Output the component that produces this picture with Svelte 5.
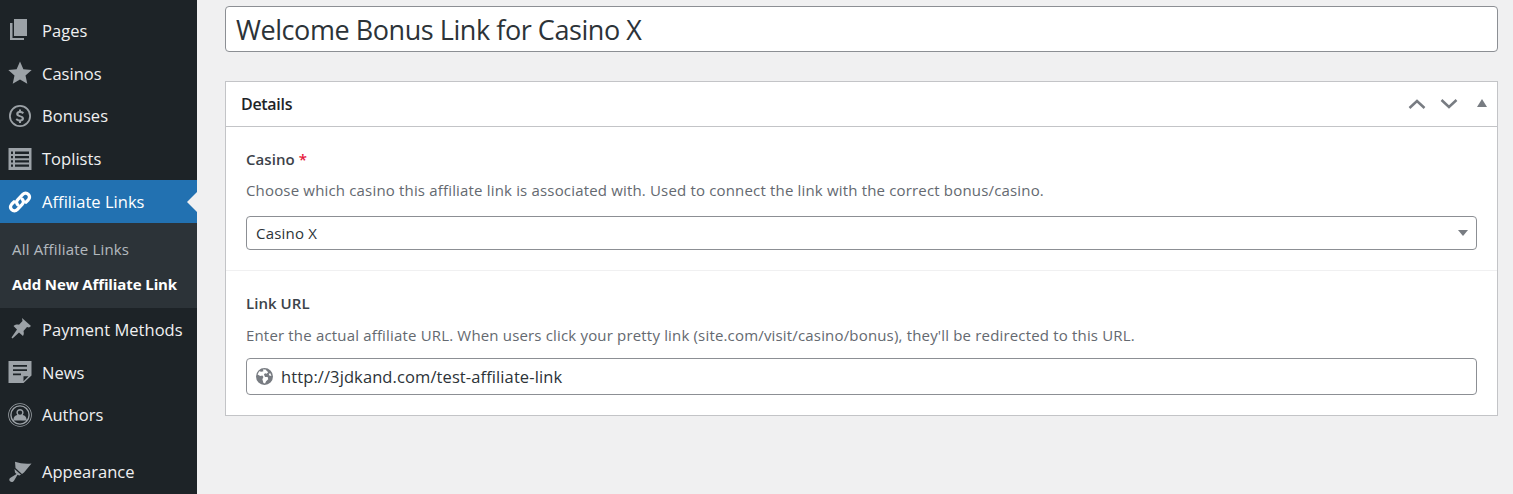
<script>
	const topItems = [
		{ label: 'Pages', icon: 'pages' },
		{ label: 'Casinos', icon: 'star' },
		{ label: 'Bonuses', icon: 'dollar' },
		{ label: 'Toplists', icon: 'list' }
	];
	const bottomItems = [
		{ label: 'Payment Methods', icon: 'pin' },
		{ label: 'News', icon: 'news' },
		{ label: 'Authors', icon: 'author' }
	];
</script>

{#snippet icon(name)}
	<svg class="icon" viewBox="0 0 24 24" aria-hidden="true">
		{#if name === 'pages'}
			<path d="M6 1h13v17H6z" />
			<path d="M4.500 5v15H16v2H2V5z" />
		{:else if name === 'star'}
			<path d="M12 .5l3.400 7.700 8.300.9-6.200 5.500 1.800 8.200-7.300-4.200-7.300 4.200 1.800-8.200L.3 9.100l8.300-.9z" />
		{:else if name === 'dollar'}
			<path fill-rule="evenodd" d="M12 1a11 11 0 1 1 0 22 11 11 0 0 1 0-22zm0 1.800a9.200 9.200 0 1 0 0 18.400 9.200 9.200 0 0 0 0-18.400z" />
			<path d="M11 5.500h2v1.600c1.300.2 2.400.8 3 1.500l-1.300 1.500c-.7-.7-1.600-1.100-2.600-1.100-1 0-1.600.4-1.600 1 0 .7.700 1 2 1.400 2 .6 3.500 1.300 3.500 3.100 0 1.500-1.100 2.600-3 2.900v1.600h-2v-1.600c-1.400-.2-2.600-.8-3.400-1.700l1.300-1.500c.8.800 1.900 1.300 3 1.300s1.800-.4 1.800-1.100c0-.7-.7-1-2.100-1.400-1.900-.6-3.400-1.300-3.400-3.100 0-1.500 1.100-2.500 2.800-2.800z" />
		{:else if name === 'list'}
			<path fill-rule="evenodd" d="M.5 1h23v22H.5zM3 4.500v2.400h2V4.500zm4 0v2.400h14V4.500zM3 9v2.200h2V9zm4 0v2.200h14V9zm-4 4.200v2.200h2v-2.200zm4 0v2.200h14v-2.200zM3 17.500v2.300h2v-2.300zm4 0v2.300h14v-2.300z" />
		{:else if name === 'link'}
			<path fill="none" stroke="currentColor" stroke-width="3.200" stroke-linecap="round" d="M9.800 14.800c-1.500-1.600-1.500-3.700 0-5.200l5-5.200c1.600-1.600 4-1.600 5.500 0s1.400 3.800 0 5.400L18 12.200" />
			<path fill="none" stroke="currentColor" stroke-width="3.200" stroke-linecap="round" d="M14.200 9.200c1.500 1.600 1.500 3.700 0 5.200l-5 5.200c-1.600 1.600-4 1.600-5.500 0s-1.400-3.800 0-5.400L6 11.800" />
		{:else if name === 'pin'}
			<path d="M14 1l9 8-2 1.500-2-.5-3.500 4c.5 2 .5 3.500-.5 5L11 15.500l-6.500 6-1-1 5.500-8-3.500-3.500c2-1.500 4-1.700 5.500-1.200L14.500 4z" />
		{:else if name === 'news'}
			<path fill-rule="evenodd" d="M.5 1h23v14.500L15.500 23H.5zM5 5v1.700h14V5zm0 4.200v1.700h14V9.200zm0 4.300v1.700h8v-1.700zm10.500 2.700v5l5-5z" />
		{:else if name === 'author'}
			<path fill-rule="evenodd" d="M12 .2a11.800 11.800 0 1 1 0 23.600A11.800 11.800 0 0 1 12 .2zm0 .8a11 11 0 1 0 0 22 11 11 0 0 0 0-22zm0 1.200a9.800 9.800 0 1 1 0 19.600 9.800 9.800 0 0 1 0-19.600zm0 1.400a8.400 8.400 0 1 0 0 16.800 8.400 8.400 0 0 0 0-16.800zM12 6a3.600 3.600 0 0 1 2.700 6c2.300.6 3.800 2 3.800 4.300v1.200h-13v-1.200c0-2.300 1.500-3.700 3.800-4.300A3.600 3.600 0 0 1 12 6zm0 1.400a2.200 2.200 0 1 0 0 4.400 2.200 2.200 0 0 0 0-4.400z" />
		{:else if name === 'brush'}
			<path d="M7 2.800c5 1.700 10.500 2.200 16.500 1.700L16 13.500 14 15 7.500 9z" />
			<path d="M6.500 10l6.500 5.800-1.800.7-1.700-.7-3.500 6c-1 1.500-3 1.500-4 .5s-1-2.500.5-3.500l6-3.800-1.500-1.500z" />
		{/if}
	</svg>
{/snippet}

<div class="page">
	<nav class="sidebar">
		<ul class="menu">
			{#each topItems as item}
				<li class="item">{@render icon(item.icon)}<span>{item.label}</span></li>
			{/each}
			<li class="item current">{@render icon('link')}<span>Affiliate Links</span></li>
			<li class="submenu">
				<div class="sub">All Affiliate Links</div>
				<div class="sub active">Add New Affiliate Link</div>
			</li>
			{#each bottomItems as item}
				<li class="item">{@render icon(item.icon)}<span>{item.label}</span></li>
			{/each}
			<li class="item spaced">{@render icon('brush')}<span>Appearance</span></li>
		</ul>
	</nav>

	<main class="content">
		<input class="title" type="text" value="Welcome Bonus Link for Casino X" />

		<section class="box">
			<header class="box-head">
				<h2>Details</h2>
				<div class="actions">
					<svg class="chev" viewBox="0 0 18 10"><path d="M1.500 9L9 2l7.500 7" /></svg>
					<svg class="chev" viewBox="0 0 18 10"><path d="M1.500 1L9 8l7.500-7" /></svg>
					<span class="tri"></span>
				</div>
			</header>

			<div class="field first">
				<div class="label">Casino <span class="req">*</span></div>
				<p class="desc">Choose which casino this affiliate link is associated with. Used to connect the link with the correct bonus/casino.</p>
				<div class="select">
					<span>Casino X</span>
					<span class="caret"></span>
				</div>
			</div>

			<div class="field second">
				<div class="label">Link URL</div>
				<p class="desc">Enter the actual affiliate URL. When users click your pretty link (site.com/visit/casino/bonus), they'll be redirected to this URL.</p>
				<div class="url">
					<svg class="globe" viewBox="0 0 16 16">
						<path fill-rule="evenodd" d="M8 0a8 8 0 1 1 0 16A8 8 0 0 1 8 0zM3 3L1.500 6 4 7.500 6 7l1 1.500-1 2 1 3.500 1.500.5 1-2 2-2-.5-2H8.500L7.500 6l1-1 1.500.5L11.500 4 10 2.500 9 1.500H6.500l.5 1.500-2 .5zM13.500 5l-1.500.5.5 1.500 2 .5z" />
					</svg>
					<span>http://3jdkand.com/test-affiliate-link</span>
				</div>
			</div>
		</section>
	</main>
</div>

<style>
	:global(body) {
		margin: 0;
		background: #f0f0f1;
	}

	.page {
		display: flex;
		height: 494px;
		overflow: hidden;
		font-family: "Open Sans", "Noto Sans", sans-serif;
	}

	.sidebar {
		width: 197px;
		flex: none;
		background: #1d2327;
		padding-top: 9px;
		box-sizing: border-box;
	}

	.menu {
		list-style: none;
		margin: 0;
		padding: 0;
	}

	.item {
		display: flex;
		align-items: center;
		height: 42.8px;
		padding-left: 8px;
		color: #f0f0f1;
		font-size: 16.5px;
		letter-spacing: 0.03px;
		position: relative;
	}

	.item span {
		margin-left: 10px;
	}

	.item.spaced {
		margin-top: 13.5px;
	}

	.icon {
		width: 24px;
		height: 24px;
		flex: none;
		fill: #9ca2a7;
		color: #9ca2a7;
	}

	.item.current {
		background: #2271b1;
		color: #fff;
	}

	.item.current .icon {
		fill: #fff;
		color: #fff;
	}

	.item.current::after {
		content: "";
		position: absolute;
		right: 0;
		top: 50%;
		margin-top: -10px;
		border: 10px solid transparent;
		border-right-color: #f0f0f1;
	}

	.submenu {
		background: #2c3338;
		height: 85px;
		padding-top: 9px;
		box-sizing: border-box;
	}

	.sub {
		height: 35px;
		line-height: 35px;
		padding-left: 12px;
		font-size: 15px;
		letter-spacing: 0.18px;
		color: rgba(240, 246, 252, 0.7);
	}

	.sub.active {
		color: #fff;
		font-weight: 700;
		letter-spacing: -0.1px;
	}

	.content {
		flex: 1;
		min-width: 0;
		padding: 6px 15px 0 28px;
		box-sizing: border-box;
	}

	.title {
		display: block;
		width: 100%;
		height: 46px;
		box-sizing: border-box;
		padding: 0 10px;
		margin: 0;
		border: 1px solid #8c8f94;
		border-radius: 4px;
		background: #fff;
		color: #2c3338;
		font-family: inherit;
		font-size: 27px;
		letter-spacing: -0.44px;
		outline: none;
	}

	.box {
		margin-top: 29px;
		background: #fff;
		border: 1px solid #c3c4c7;
		height: 335px;
		box-sizing: border-box;
	}

	.box-head {
		display: flex;
		align-items: center;
		justify-content: space-between;
		height: 44px;
		padding: 0 15px;
		border-bottom: 1px solid #c3c4c7;
	}

	h2 {
		margin: 0;
		font-size: 16px;
		font-weight: 600;
		letter-spacing: -0.3px;
		color: #1d2327;
	}

	.actions {
		display: flex;
		align-items: center;
		gap: 14px;
		margin-right: -5px;
	}

	.chev {
		width: 18px;
		height: 10px;
		fill: none;
		stroke: #787c82;
		stroke-width: 2.500;
	}

	.tri {
		width: 0;
		height: 0;
		margin-left: 5px;
		margin-bottom: 3px;
		border: 5px solid transparent;
		border-top: 0;
		border-bottom: 8px solid #787c82;
	}

	.field {
		padding: 0 20px;
		box-sizing: border-box;
	}

	.field.first {
		height: 144px;
		padding-top: 22px;
		border-bottom: 1px solid #f0f0f1;
	}

	.field.second {
		padding-top: 22px;
	}

	.label {
		font-size: 15px;
		line-height: 20px;
		font-weight: 600;
		letter-spacing: 0.05px;
		color: #3c434a;
	}

	.req {
		color: #e6193c;
	}

	.desc {
		margin: 11px 0 0;
		font-size: 15px;
		line-height: 20px;
		letter-spacing: 0.17px;
		color: #646970;
	}

	.second .desc {
		margin-top: 12px;
	}

	.select,
	.url {
		display: flex;
		align-items: center;
		box-sizing: border-box;
		background: #fff;
		border: 1px solid #8c8f94;
		border-radius: 4px;
		color: #2c3338;
	}

	.select {
		justify-content: space-between;
		height: 34px;
		margin-top: 15px;
		padding: 0 8px 0 9px;
		font-size: 15px;
		letter-spacing: 0.2px;
	}

	.first .select {
		margin-top: 16px;
	}

	.caret {
		border: 5px solid transparent;
		border-bottom: 0;
		border-top: 6px solid #787c82;
	}

	.url {
		height: 37px;
		margin-top: 13px;
		padding: 0 9px;
		font-size: 16.5px;
		letter-spacing: 0.1px;
	}

	.globe {
		width: 17px;
		height: 17px;
		flex: none;
		fill: #787c82;
		margin-right: 8px;
	}
</style>
